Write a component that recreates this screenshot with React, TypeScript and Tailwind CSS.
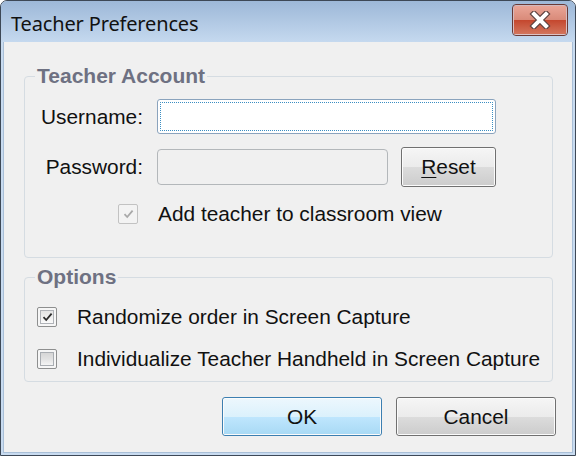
import type { ReactNode } from "react";

const BODY = "font-['Liberation_Sans',Arial,sans-serif] text-[20.85px] text-[#111]";

function CheckMark({ color }: { color: string }) {
  return (
    <svg width="11" height="10" viewBox="0 0 11 10" fill="none">
      <path d="M1.5 5.2 L4.2 8 L9.6 1.6" stroke={color} strokeWidth="1.8" />
    </svg>
  );
}

function Checkbox({ checked, disabled }: { checked?: boolean; disabled?: boolean }) {
  if (disabled) {
    return (
      <span className="flex h-[20px] w-[20px] shrink-0 items-center justify-center rounded-[2px] border border-[#c2c2c2] bg-[#f3f3f3]">
        {checked && <CheckMark color="#a9a9a9" />}
      </span>
    );
  }
  return (
    <span className="flex h-[20px] w-[20px] shrink-0 rounded-[2px] border border-[#8e8f8f] bg-[#f6f6f6] p-[2px]">
      <span
        className={
          checked
            ? "flex flex-1 items-center justify-center border border-[#b0b3b8] bg-gradient-to-b from-[#e4e4e4] to-[#fafafa]"
            : "flex flex-1 border border-[#a9adb2] bg-gradient-to-b from-[#d6d6d6] via-[#e2e2e2] to-[#f4f4f4]"
        }
      >
        {checked && <CheckMark color="#2b2b2b" />}
      </span>
    </span>
  );
}

function Button({ children, primary, className }: { children: ReactNode; primary?: boolean; className: string }) {
  return (
    <div
      className={`relative flex items-center justify-center overflow-hidden rounded-[3px] border ${
        primary ? "border-[#3c7fb1]" : "border-[#707070]"
      } ${className}`}
    >
      <div className="absolute inset-0 flex flex-col rounded-[2px] border border-white/70">
        <div className={`flex-1 bg-gradient-to-b ${primary ? "from-[#ecf7fd] to-[#dbf1fc]" : "from-[#f5f5f5] to-[#ebebeb]"}`} />
        <div className={`flex-1 bg-gradient-to-b ${primary ? "from-[#bfe6fd] to-[#a9daf5]" : "from-[#dcdcdc] to-[#cdcdcd]"}`} />
      </div>
      <span className={`relative ${BODY}`}>{children}</span>
    </div>
  );
}

function GroupBox({ title, children, className }: { title: string; children: ReactNode; className?: string }) {
  return (
    <fieldset className={`rounded-[4px] border border-[#d5dce2] ${className ?? ""}`}>
      <legend className="ml-[10px] px-[2px] font-['Liberation_Sans',Arial,sans-serif] text-[21px] font-bold leading-[20px] text-[#6e7182]">
        {title}
      </legend>
      {children}
    </fieldset>
  );
}

export default function App() {
  return (
    <div className="flex h-[456px] w-[576px] flex-col overflow-hidden rounded-t-[7px] border border-[#3d4856] bg-[#c8dbf0]">
      {/* Title bar */}
      <div className="flex h-[41px] shrink-0 items-center justify-between bg-gradient-to-b from-[#9db8d8] to-[#c5d9ef] pl-[10px] pr-[7px]">
        <span className="pt-[4px] font-['Segoe_UI','Noto_Sans',sans-serif] text-[20px] tracking-[-0.15px] text-[#111]">
          Teacher Preferences
        </span>
        <div className="relative mt-[-4px] flex h-[32px] w-[56px] items-center justify-center overflow-hidden rounded-[4px] border border-[#6a3a36]">
          <div className="absolute inset-0 flex flex-col rounded-[3px] border border-[#f0b8ab]/60">
            <div className="flex-1 bg-gradient-to-b from-[#e9a597] to-[#d98a79]" />
            <div className="flex-1 bg-gradient-to-b from-[#c4462d] to-[#d2745c]" />
          </div>
          <svg className="relative" width="22" height="18" viewBox="0 0 22 18">
            <path d="M5 3 L17 15 M17 3 L5 15" stroke="#5e4240" strokeWidth="6.4" strokeLinecap="square" />
            <path d="M5 3 L17 15 M17 3 L5 15" stroke="#ffffff" strokeWidth="4" strokeLinecap="square" />
          </svg>
        </div>
      </div>

      {/* Client area */}
      <div className="mx-[2px] mb-[2px] flex flex-1 flex-col border border-t-0 border-[#a9bfd7] bg-[#f0f0f0] pl-[20px] pr-[16px] pt-[24px]">
        <GroupBox title="Teacher Account" className="mr-[3px] pb-[33px]">
          <div className="mt-[13px] flex h-[35px] items-center">
            <span className={`w-[118px] text-right ${BODY}`}>Username:</span>
            <div className="relative ml-[14px] h-[35px] w-[339px] rounded-[3px] border border-[#8aa3bd] bg-white">
              <div className="absolute inset-[2px] rounded-[1px] border border-dotted border-[#3b8ec2]" />
            </div>
          </div>
          <div className="mt-[13px] flex h-[40px] items-center">
            <span className={`w-[118px] text-right ${BODY}`}>Password:</span>
            <div className="ml-[14px] h-[36px] w-[231px] rounded-[4px] border border-[#b3b7ba] bg-[#f0f0f0]" />
            <Button className="ml-[13px] h-[40px] w-[95px]">
              <span className="underline decoration-1 underline-offset-[3px]">R</span>eset
            </Button>
          </div>
          <div className="mt-[17px] flex h-[20px] items-center pl-[93px]">
            <Checkbox checked disabled />
            <span className={`ml-[20px] ${BODY}`}>Add teacher to classroom view</span>
          </div>
        </GroupBox>

        <GroupBox title="Options" className="mr-[3px] mt-[9px] pb-[12px]">
          <div className="mt-[20px] flex h-[20px] items-center pl-[12px]">
            <Checkbox checked />
            <span className={`ml-[20px] ${BODY}`}>Randomize order in Screen Capture</span>
          </div>
          <div className="mt-[22px] flex h-[20px] items-center pl-[12px]">
            <Checkbox />
            <span className={`ml-[20px] ${BODY}`}>Individualize Teacher Handheld in Screen Capture</span>
          </div>
        </GroupBox>

        <div className="mt-[15px] flex justify-end gap-[14px]">
          <Button primary className="h-[39px] w-[160px]">OK</Button>
          <Button className="h-[39px] w-[160px]">Cancel</Button>
        </div>
      </div>
    </div>
  );
}
